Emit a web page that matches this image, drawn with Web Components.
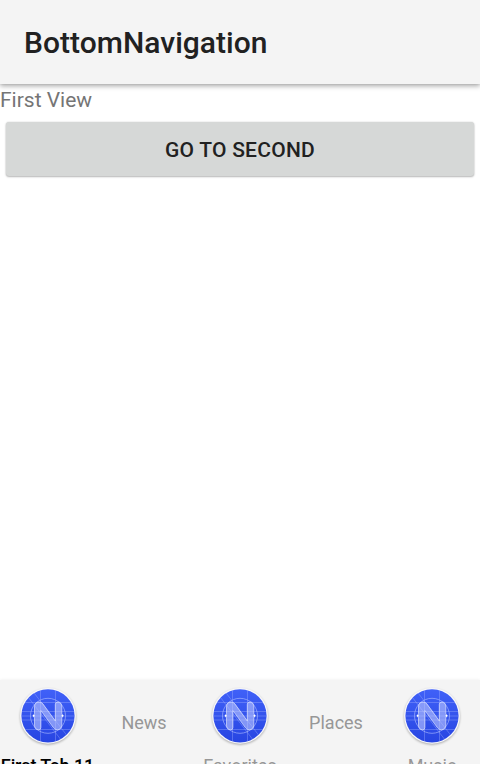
<!DOCTYPE html>
<html lang="en">
<head>
<meta charset="utf-8">
<title>BottomNavigation</title>
<style>
body { margin: 0; background: #fff; font-family: Roboto, "Noto Sans", sans-serif; }
</style>
</head>
<body>
<app-screen>
  <app-bar slot="bar">BottomNavigation</app-bar>
  <text-view>First View</text-view>
  <raised-button>GO TO SECOND</raised-button>
  <bottom-nav slot="nav">
    <nav-tab icon active>First Tab 11</nav-tab>
    <nav-tab>News</nav-tab>
    <nav-tab icon>Favorites</nav-tab>
    <nav-tab>Places</nav-tab>
    <nav-tab icon>Music</nav-tab>
  </bottom-nav>
</app-screen>
<script>
const define = (name, html) => customElements.define(name, class extends HTMLElement {
  constructor() {
    super();
    this.attachShadow({ mode: 'open' }).innerHTML = html;
  }
});

define('app-screen', `
<style>
  :host { display: flex; flex-direction: column; width: 480px; height: 764px; overflow: hidden; background: #fff; }
  main { flex: 1; display: flex; flex-direction: column; }
</style>
<slot name="bar"></slot><main><slot></slot></main><slot name="nav"></slot>`);

define('app-bar', `
<style>
  :host { display: flex; align-items: center; box-sizing: border-box; height: 84px; padding: 1px 24px 0;
    background: #f4f4f4; color: #212121; font-size: 30px; font-weight: 500; line-height: 35px;
    letter-spacing: .03px;
    box-shadow: 0 2px 5px rgba(0,0,0,.34), 0 0 2px rgba(0,0,0,.1); }
</style>
<span><slot></slot></span>`);

define('text-view', `
<style>
  :host { display: block; box-sizing: border-box; height: 31px; padding-top: 1px; font-size: 21px; line-height: 30px; color: #757575; }
</style>
<slot></slot>`);

define('raised-button', `
<style>
  :host { display: flex; padding: 7px 6px; }
  button { flex: 1; height: 54px; padding: 3px 0 0; border: 0; border-radius: 3px; background: #d6d8d7;
    color: #212121; font: 500 21px/25px Roboto, "Noto Sans", sans-serif; letter-spacing: .25px;
    box-shadow: 0 1px 2px rgba(0,0,0,.26), 0 0 2px rgba(0,0,0,.14); }
</style>
<button><slot></slot></button>`);

define('bottom-nav', `
<style>
  :host { display: grid; grid-template-columns: repeat(5, 96px); height: 84px; background: #f4f4f4;
    box-shadow: 0 0 3px rgba(0,0,0,.08); }
</style>
<slot></slot>`);

define('n-logo', `
<style>
  :host { display: block; width: 60px; height: 60px; }
  svg { display: block; overflow: visible; filter: drop-shadow(0 1px 1px rgba(0,0,0,.3)); }
</style>
<svg width="60" height="60" viewBox="0 0 60 60" fill="none">
  <defs>
    <linearGradient id="g" x1="0" y1="0" x2="0" y2="1">
      <stop stop-color="#4061f8"/><stop offset="1" stop-color="#2745e2"/>
    </linearGradient>
    <clipPath id="c"><circle cx="30" cy="29.8" r="26.6"/></clipPath>
  </defs>
  <circle cx="30" cy="29.8" r="27.9" fill="#f7f7fb"/>
  <circle cx="30" cy="29.8" r="26.6" fill="url(#g)"/>
  <g clip-path="url(#c)" stroke="#a9b8ff" stroke-opacity=".36" stroke-width="1">
    <path d="M22.5 0V60M37.5 0V60M0 16.5H60M0 25.5H60M0 30H60M0 34H60M0 43.5H60M7 7L47 59M13 3L54 56"/>
    <circle cx="30" cy="29.8" r="17.5" stroke-opacity=".65"/>
  </g>
  <path d="M16.5 21Q16.5 16 21 16Q23.5 16 25 18L37.3 35V18.5Q37.3 16 40 16Q43.8 16 43.8 21V27.5L44.8 29.8L43.8 32V39Q43.8 43.8 39.5 43.8Q37 43.8 35.5 41.8L22.9 24.5V41.5Q22.9 43.8 20.5 43.8Q16.5 43.8 16.5 39V32L15.5 29.8L16.5 27.5Z"
    fill="#c0caff" fill-opacity=".58" stroke="#dce2ff" stroke-opacity=".75" stroke-width=".9" stroke-linejoin="round"/>
  <circle cx="15.7" cy="29.8" r="1" fill="#fff"/><circle cx="44.5" cy="29.8" r="1" fill="#fff"/>
</svg>`);

customElements.define('nav-tab', class extends HTMLElement {
  constructor() {
    super();
    this.attachShadow({ mode: 'open' });
  }
  connectedCallback() {
    this.shadowRoot.innerHTML = `
<style>
  :host { display: flex; flex-direction: column; align-items: center; justify-content: center; box-sizing: border-box;
    height: 84px; padding-top: 0; font-size: 18px; line-height: 21px; color: #979797; white-space: nowrap; }
  :host([icon]) { height: 96px; justify-content: flex-start; padding-top: 6px; }
  :host([icon]) span { margin-top: 9px; }
  :host([active]) { color: #000; font-weight: 500; letter-spacing: -.12px; padding-right: 1px; }
</style>
${this.hasAttribute('icon') ? '<n-logo></n-logo>' : ''}<span><slot></slot></span>`;
  }
});
</script>
</body>
</html>
